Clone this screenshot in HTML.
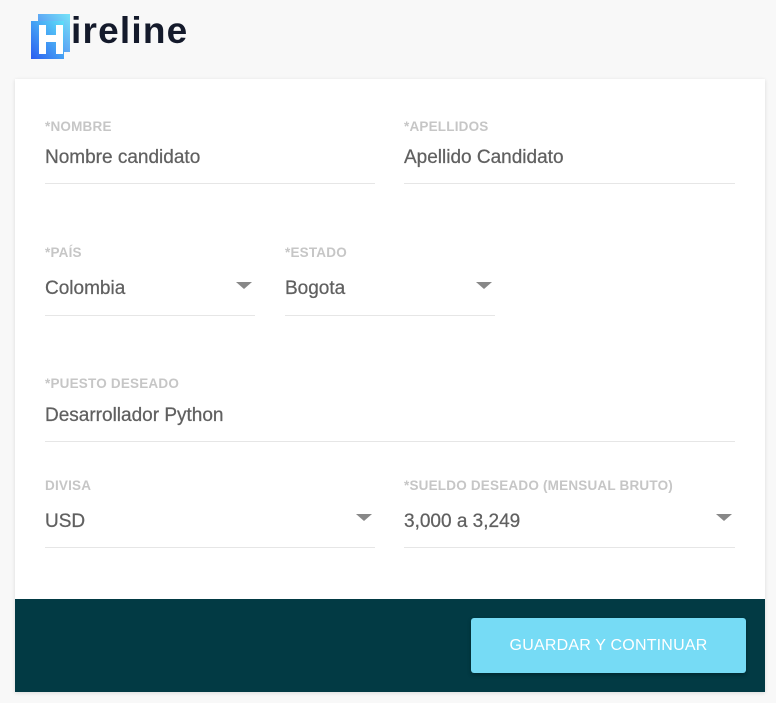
<!DOCTYPE html>
<html><head><meta charset="utf-8"><style>
*{margin:0;padding:0;box-sizing:border-box}
body{width:776px;height:703px;background:#f8f8f8;font-family:"Liberation Sans",sans-serif;position:relative;overflow:hidden}
.card{position:absolute;left:15px;top:79px;width:750px;height:613px;background:#fff;box-shadow:0 1px 4px rgba(0,0,0,.12)}
.foot{position:absolute;left:0;top:520px;width:750px;height:93px;background:#023a44}
.btn{position:absolute;left:456px;top:19px;width:275px;height:55px;background:#76dbf5;border-radius:3px;color:#fff;font-size:16px;text-align:center;line-height:55px;box-shadow:0 2px 4px rgba(0,0,0,.3);letter-spacing:.2px}
.f{position:absolute;border-bottom:1px solid #e6e6e6}
.l{position:absolute;font-size:13.5px;font-weight:bold;color:#c6c6c6;letter-spacing:.2px}
.v{position:absolute;font-size:19px;color:#606060;-webkit-text-stroke:.25px #606060}
.a{position:absolute;width:0;height:0;border-left:8px solid transparent;border-right:8px solid transparent;border-top:7px solid #888}
.logo{position:absolute;left:31px;top:14px}
.logo span{position:absolute;left:40px;top:-4px;font-size:37px;font-weight:bold;color:#141a2b;letter-spacing:1.2px}
</style></head><body>
<div class="logo">
<svg width="40" height="46" viewBox="0 0 40 46"><defs><linearGradient id="g" x1="0" y1="1" x2="1" y2="0"><stop offset="0" stop-color="#2a5cf0"/><stop offset="1" stop-color="#5fe0f8"/></linearGradient></defs>
<rect x="7" y="0" width="32" height="38" fill="url(#g)" opacity=".85"/><rect x="0" y="7" width="33" height="38" fill="url(#g)"/>
<path d="M8 11h7v10h10v-10h7v29h-7v-12h-10v12h-7z" fill="#fff"/></svg>
<span>ireline</span></div>
<div class="card">
<div class="l" style="left:30px;top:40px">*NOMBRE</div><div class="v" style="left:30px;top:68px">Nombre candidato</div><div class="f" style="left:30px;top:104px;width:330px"></div>
<div class="l" style="left:389px;top:40px">*APELLIDOS</div><div class="v" style="left:389px;top:68px">Apellido Candidato</div><div class="f" style="left:389px;top:104px;width:331px"></div>
<div class="l" style="left:30px;top:166px">*PAÍS</div><div class="v" style="left:30px;top:199px">Colombia</div><div class="a" style="left:221px;top:203px"></div><div class="f" style="left:30px;top:236px;width:210px"></div>
<div class="l" style="left:270px;top:166px">*ESTADO</div><div class="v" style="left:270px;top:199px">Bogota</div><div class="a" style="left:461px;top:203px"></div><div class="f" style="left:270px;top:236px;width:210px"></div>
<div class="l" style="left:30px;top:297px">*PUESTO DESEADO</div><div class="v" style="left:30px;top:326px">Desarrollador Python</div><div class="f" style="left:30px;top:362px;width:690px"></div>
<div class="l" style="left:30px;top:399px">DIVISA</div><div class="v" style="left:30px;top:432px">USD</div><div class="a" style="left:341px;top:435px"></div><div class="f" style="left:30px;top:468px;width:330px"></div>
<div class="l" style="left:389px;top:399px">*SUELDO DESEADO (MENSUAL BRUTO)</div><div class="v" style="left:389px;top:432px">3,000 a 3,249</div><div class="a" style="left:701px;top:435px"></div><div class="f" style="left:389px;top:468px;width:331px"></div>
<div class="foot"><div class="btn">GUARDAR Y CONTINUAR</div></div>
</div>
</body></html>
